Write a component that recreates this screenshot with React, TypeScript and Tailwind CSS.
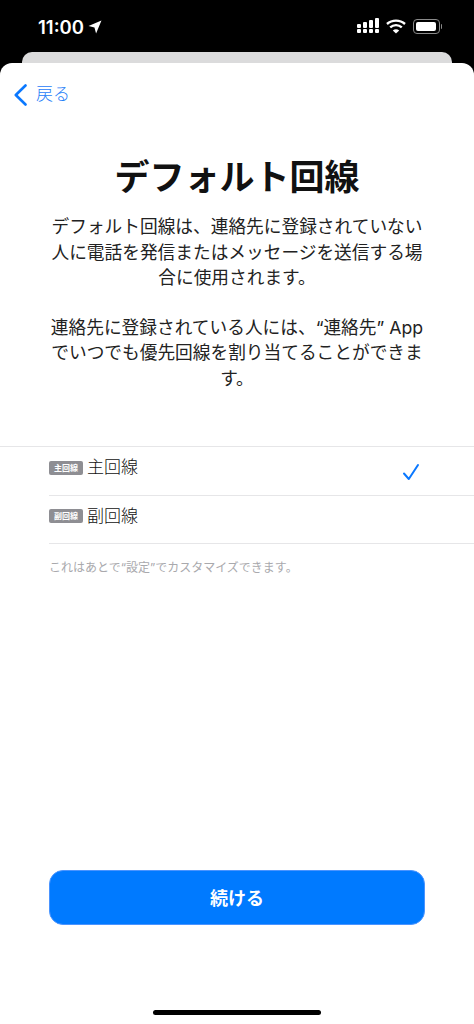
const font = { fontFamily: '"Inter", "Noto Sans CJK JP", sans-serif' };

function LineBadge({ label }: { label: string }) {
  return (
    <span className="flex h-[14px] w-[34px] items-center justify-center rounded-[2px] bg-[#8e8e93] text-[8px] font-bold leading-none text-white">
      {label}
    </span>
  );
}

function LineRow({ badge, name, checked }: { badge: string; name: string; checked?: boolean }) {
  return (
    <div className="relative ml-[49px] flex h-[48.5px] items-center gap-[4px] border-b border-[#e6e6e8] pb-[6px]">
      <LineBadge label={badge} />
      <span className="text-[17px] font-light text-[#111]">{name}</span>
      {checked && (
        <svg
          className="absolute right-[54px] top-[16px]"
          width="18"
          height="18"
          viewBox="0 0 18 18"
          fill="none"
          stroke="#0a78ff"
          strokeWidth="2"
          strokeLinecap="round"
          strokeLinejoin="round"
        >
          <path d="M2 10.5 L6.8 16 L16 2" />
        </svg>
      )}
    </div>
  );
}

function StatusBar() {
  return (
    <div className="flex h-[52px] shrink-0 items-start justify-between pl-[38px] pr-[32px] pt-[15px] text-white">
      <div className="flex items-center gap-[4px]">
        <span className="text-[18.5px] font-semibold leading-[24px]">11:00</span>
        <svg width="14" height="14" viewBox="0 0 13 13" fill="white">
          <path d="M12.5 0.5 L0.5 5.5 L6 7 L7.5 12.5 Z" />
        </svg>
      </div>
      <div className="flex items-center gap-[6px] pt-[3px]">
        <svg width="23" height="16" viewBox="0 0 23 16" fill="white">
          <rect x="0" y="6" width="4" height="4" rx="1" />
          <rect x="0" y="11" width="4" height="4" rx="1" />
          <rect x="6" y="4" width="4" height="6" rx="1" />
          <rect x="6" y="11" width="4" height="4" rx="1" />
          <rect x="12" y="2" width="4" height="8" rx="1" />
          <rect x="12" y="11" width="4" height="4" rx="1" />
          <rect x="18" y="0" width="4" height="10" rx="1" />
          <rect x="18" y="11" width="4" height="4" rx="1" />
        </svg>
        <svg width="20" height="15" viewBox="0 0 20 15" fill="none" stroke="white" strokeWidth="2.4">
          <path d="M1 5 C6 0.5 14 0.5 19 5" />
          <path d="M4.2 8.4 C7.5 5.4 12.5 5.4 15.8 8.4" />
          <path d="M10 14.5 L6.8 11.4 C8.6 9.9 11.4 9.9 13.2 11.4 Z" fill="white" stroke="none" />
        </svg>
        <div className="ml-[1px] flex items-center">
          <div className="h-[15px] w-[27px] rounded-[4px] border border-[#8a8a8a] p-[2px]">
            <div className="h-full w-[20px] rounded-[2px] bg-white" />
          </div>
          <div className="ml-[1px] h-[5px] w-[1.5px] rounded-r bg-[#8a8a8a]" />
        </div>
      </div>
    </div>
  );
}

export default function App() {
  return (
    <div className="flex h-[1024px] flex-col overflow-hidden bg-black" style={font}>
      <StatusBar />
      <div className="mx-[22px] h-[20px] shrink-0 rounded-t-[10px] bg-[#dbdbdc]" />
      <div className="-mt-[9px] flex flex-1 flex-col rounded-t-[12px] bg-white">
        {/* nav */}
        <div className="flex h-[55px] shrink-0 items-center gap-[9px] pl-[14px] pt-[8px] text-[#1f80f8]">
          <svg width="13" height="22" viewBox="0 0 13 22" fill="none" stroke="#0a78ff" strokeWidth="2.6" strokeLinecap="round" strokeLinejoin="round">
            <path d="M11.5 1.5 L1.8 11 L11.5 20.5" />
          </svg>
          <span className="text-[17px] font-light">戻る</span>
        </div>

        <h1 className="mt-[36px] text-center text-[35px] font-bold leading-[46px] text-[#111]">
          デフォルト回線
        </h1>

        <div className="mt-[14px] px-[49px] text-center text-[17.7px] leading-[25.5px] text-[#222]">
          <p>デフォルト回線は、連絡先に登録されていない人に電話を発信またはメッセージを送信する場合に使用されます。</p>
          <p className="mt-[24px]">
            連絡先に登録されている人には、“連絡先” App
            <br />
            でいつでも優先回線を割り当てることができます。
          </p>
        </div>

        {/* line picker */}
        <div className="mt-[55px] border-t border-[#e6e6e8]">
          <LineRow badge="主回線" name="主回線" checked />
          <LineRow badge="副回線" name="副回線" />
        </div>
        <p className="ml-[49px] mt-[16px] text-[12px] leading-[16px] text-[#a9a9ad]">
          これはあとで“設定”でカスタマイズできます。
        </p>

        <button className="mx-[49px] mt-auto flex h-[55px] shrink-0 items-center justify-center rounded-[14px] border border-[#4a94ff] bg-[#007aff] pt-[1px] text-[18px] font-semibold text-white">
          続ける
        </button>
        <div className="mx-auto mb-[9px] mt-[85px] h-[5px] w-[168px] shrink-0 rounded-full bg-black" />
      </div>
    </div>
  );
}
